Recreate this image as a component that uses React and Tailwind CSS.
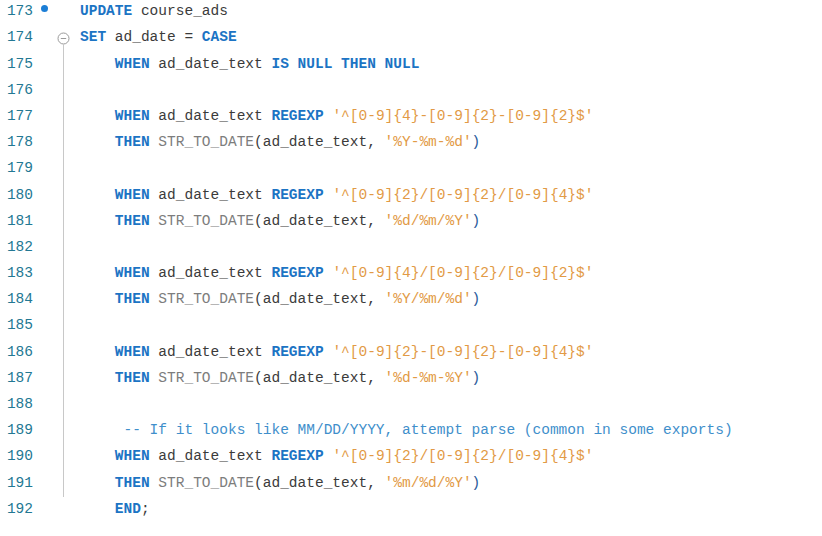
import React from "react";

const K = ({ children }) => <span className="text-[#1c74c4] font-bold">{children}</span>;
const F = ({ children }) => <span className="text-[#7d7d7d]">{children}</span>;
const S = ({ children }) => <span className="text-[#e29a45]">{children}</span>;
const C = ({ children }) => <span className="text-[#3f8fcb]">{children}</span>;
const P = ({ children }) => <span className="text-[#2a5a9a]">{children}</span>;

const lines = [
  [173, <><K>UPDATE</K> course_ads</>, 0],
  [174, <><K>SET</K> ad_date = <K>CASE</K></>, 0],
  [175, <>    <K>WHEN</K> ad_date_text <K>IS</K> <K>NULL</K> <K>THEN</K> <K>NULL</K></>, 0],
  [176, null],
  [177, <>    <K>WHEN</K> ad_date_text <K>REGEXP</K> <S>'^[0-9]{"{"}4{"}"}-[0-9]{"{"}2{"}"}-[0-9]{"{"}2{"}"}$'</S></>],
  [178, <>    <K>THEN</K> <F>STR_TO_DATE</F>(ad_date_text, <S>'%Y-%m-%d'</S><P>)</P></>],
  [179, null],
  [180, <>    <K>WHEN</K> ad_date_text <K>REGEXP</K> <S>'^[0-9]{"{"}2{"}"}/[0-9]{"{"}2{"}"}/[0-9]{"{"}4{"}"}$'</S></>],
  [181, <>    <K>THEN</K> <F>STR_TO_DATE</F>(ad_date_text, <S>'%d/%m/%Y'</S><P>)</P></>],
  [182, null],
  [183, <>    <K>WHEN</K> ad_date_text <K>REGEXP</K> <S>'^[0-9]{"{"}4{"}"}/[0-9]{"{"}2{"}"}/[0-9]{"{"}2{"}"}$'</S></>],
  [184, <>    <K>THEN</K> <F>STR_TO_DATE</F>(ad_date_text, <S>'%Y/%m/%d'</S><P>)</P></>],
  [185, null],
  [186, <>    <K>WHEN</K> ad_date_text <K>REGEXP</K> <S>'^[0-9]{"{"}2{"}"}-[0-9]{"{"}2{"}"}-[0-9]{"{"}4{"}"}$'</S></>],
  [187, <>    <K>THEN</K> <F>STR_TO_DATE</F>(ad_date_text, <S>'%d-%m-%Y'</S><P>)</P></>],
  [188, null],
  [189, <>     <C>-- If it looks like MM/DD/YYYY, attempt parse (common in some exports)</C></>],
  [190, <>    <K>WHEN</K> ad_date_text <K>REGEXP</K> <S>'^[0-9]{"{"}2{"}"}/[0-9]{"{"}2{"}"}/[0-9]{"{"}4{"}"}$'</S></>],
  [191, <>    <K>THEN</K> <F>STR_TO_DATE</F>(ad_date_text, <S>'%m/%d/%Y'</S><P>)</P></>],
  [192, <>    <K>END</K>;</>],
];

export default function App() {
  return (
    <div
      className="w-[822px] h-[536px] bg-white overflow-hidden relative"
      style={{ fontFamily: '"Liberation Mono", "DejaVu Sans Mono", monospace' }}
    >
      <div className="-mt-[1px] flex flex-col text-[14.5px] text-[#3b3b3b]">
        {lines.map(([n, content], i) => (
          <div key={n} className="flex h-[26.2px] items-center">
            <div className="w-[33px] text-right text-[#237893]">{n}</div>
            <div className="w-[47px] relative h-full flex items-center">
              {i === 0 && (
                <div className="absolute left-[8px] top-[6px] w-[7px] h-[7px] rounded-full bg-[#1c7ed6]" />
              )}
              {i === 1 && (
                <svg className="absolute left-[24px]" width="13" height="13" viewBox="0 0 13 13">
                  <circle cx="6.5" cy="6.5" r="5.5" fill="white" stroke="#9a9a9a" strokeWidth="1" />
                  <line x1="3.8" y1="6.5" x2="9.2" y2="6.5" stroke="#9a9a9a" strokeWidth="1" />
                </svg>
              )}
              {i >= 2 && i <= 18 && (
                <div className="absolute left-[30px] w-px bg-[#c8c8c8] top-0 bottom-0" />
              )}
              {i === 1 && (
                <div className="absolute left-[30px] w-px bg-[#c8c8c8] top-[19px] bottom-0" />
              )}
            </div>
            <div className="whitespace-pre">{content}</div>
          </div>
        ))}
      </div>
    </div>
  );
}
